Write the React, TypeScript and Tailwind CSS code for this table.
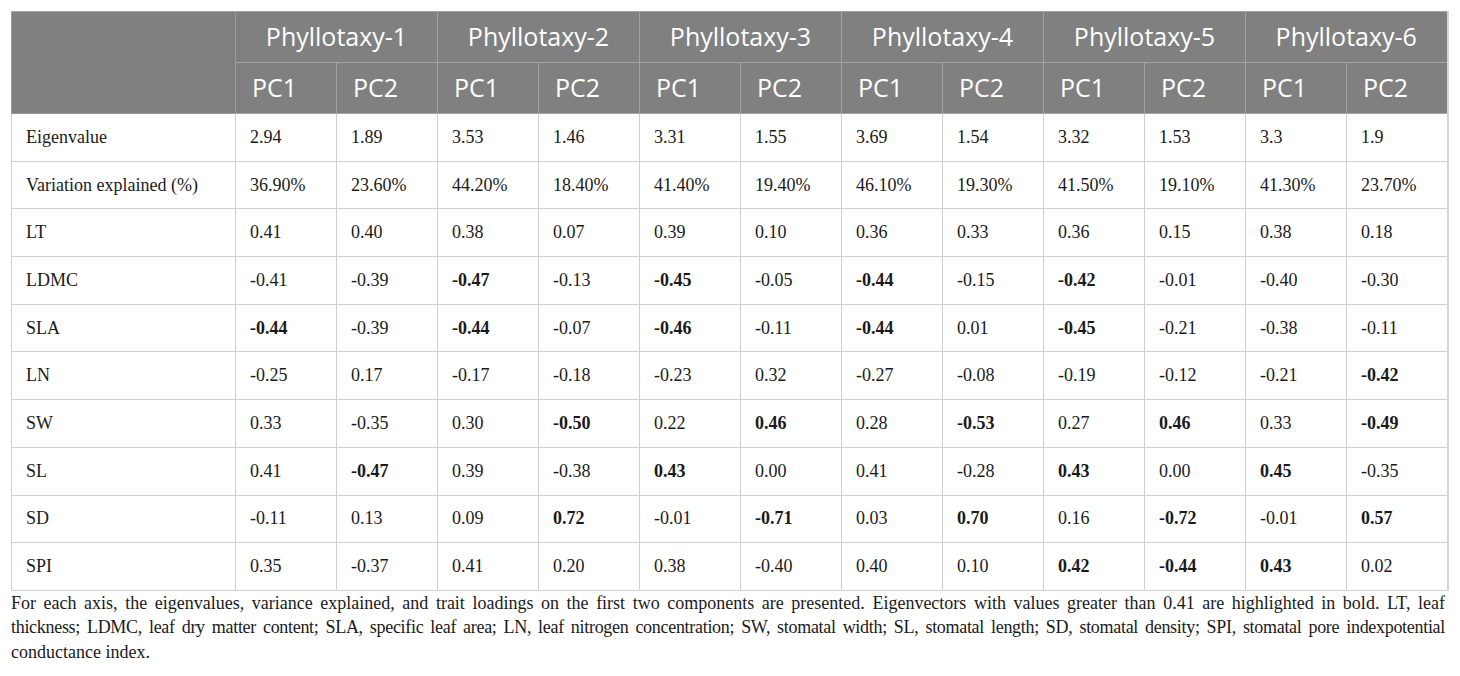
import React from 'react';

type Cell = { v: string; b?: boolean };

const c = (s: string): Cell => (s.startsWith('*') ? { v: s.slice(1), b: true } : { v: s });

const rows: { label: string; cells: Cell[] }[] = [
    { label: 'Eigenvalue', cells: '2.94 1.89 3.53 1.46 3.31 1.55 3.69 1.54 3.32 1.53 3.3 1.9'.split(' ').map(c) },
    { label: 'Variation explained (%)', cells: '36.90% 23.60% 44.20% 18.40% 41.40% 19.40% 46.10% 19.30% 41.50% 19.10% 41.30% 23.70%'.split(' ').map(c) },
    { label: 'LT', cells: '0.41 0.40 0.38 0.07 0.39 0.10 0.36 0.33 0.36 0.15 0.38 0.18'.split(' ').map(c) },
    { label: 'LDMC', cells: '-0.41 -0.39 *-0.47 -0.13 *-0.45 -0.05 *-0.44 -0.15 *-0.42 -0.01 -0.40 -0.30'.split(' ').map(c) },
    { label: 'SLA', cells: '*-0.44 -0.39 *-0.44 -0.07 *-0.46 -0.11 *-0.44 0.01 *-0.45 -0.21 -0.38 -0.11'.split(' ').map(c) },
    { label: 'LN', cells: '-0.25 0.17 -0.17 -0.18 -0.23 0.32 -0.27 -0.08 -0.19 -0.12 -0.21 *-0.42'.split(' ').map(c) },
    { label: 'SW', cells: '0.33 -0.35 0.30 *-0.50 0.22 *0.46 0.28 *-0.53 0.27 *0.46 0.33 *-0.49'.split(' ').map(c) },
    { label: 'SL', cells: '0.41 *-0.47 0.39 -0.38 *0.43 0.00 0.41 -0.28 *0.43 0.00 *0.45 -0.35'.split(' ').map(c) },
    { label: 'SD', cells: '-0.11 0.13 0.09 *0.72 -0.01 *-0.71 0.03 *0.70 0.16 *-0.72 -0.01 *0.57'.split(' ').map(c) },
    { label: 'SPI', cells: '0.35 -0.37 0.41 0.20 0.38 -0.40 0.40 0.10 *0.42 *-0.44 *0.43 0.02'.split(' ').map(c) },
];

const groups = [1, 2, 3, 4, 5, 6];

export default function App() {
    return (
        <div className="w-[1460px] h-[676px] bg-white pl-[11px] pt-[11px]">
            <table className="w-[1436px] table-fixed border-collapse border-r-2 border-r-[#d4d4d4]">
                <colgroup>
                    <col className="w-[224px]" />
                    {Array.from({ length: 12 }).map((_, i) => (
                        <col key={i} className="w-[101px]" />
                    ))}
                </colgroup>
                <thead className="bg-[#808080] text-white font-['Open_Sans',sans-serif] text-[25px]">
                    <tr className="h-[51px]">
                        <th rowSpan={2} className="border border-[#9a9a9a] border-t-[#a8a8a8]"></th>
                        {groups.map((g) => (
                            <th key={g} colSpan={2} className="border border-[#a3a3a3] font-normal text-center">
                                Phyllotaxy-{g}
                            </th>
                        ))}
                    </tr>
                    <tr className="h-[51px]">
                        {groups.map((g) => (
                            <React.Fragment key={g}>
                                <th className="border border-[#a3a3a3] font-normal text-left pl-[16px]">PC1</th>
                                <th className="border border-[#a3a3a3] font-normal text-left pl-[16px]">PC2</th>
                            </React.Fragment>
                        ))}
                    </tr>
                </thead>
                <tbody className="font-['Liberation_Serif',serif] text-[18px] text-[#1a1a1a]">
                    {rows.map((r) => (
                        <tr key={r.label} className="h-[47.7px]">
                            <td className="border border-[#cfcfcf] pl-[14px]">{r.label}</td>
                            {r.cells.map((x, i) => (
                                <td key={i} className={`border border-[#cfcfcf] pl-[14px] ${x.b ? 'font-bold' : ''}`}>
                                    {x.v}
                                </td>
                            ))}
                        </tr>
                    ))}
                </tbody>
            </table>
            <div className="w-[1434px] mt-[0px] font-['Liberation_Serif',serif] text-[18px] leading-[24.5px] text-[#1a1a1a]">
                <span className="block text-justify [text-align-last:justify]">
                    For each axis, the eigenvalues, variance explained, and trait loadings on the first two components are presented. Eigenvectors with values greater than 0.41 are highlighted in bold. LT, leaf
                </span>
                <span className="block text-justify [text-align-last:justify] tracking-[-0.3px]">
                    thickness; LDMC, leaf dry matter content; SLA, specific leaf area; LN, leaf nitrogen concentration; SW, stomatal width; SL, stomatal length; SD, stomatal density; SPI, stomatal pore indexpotential
                </span>
                <span className="block">conductance index.</span>
            </div>
        </div>
    );
}
